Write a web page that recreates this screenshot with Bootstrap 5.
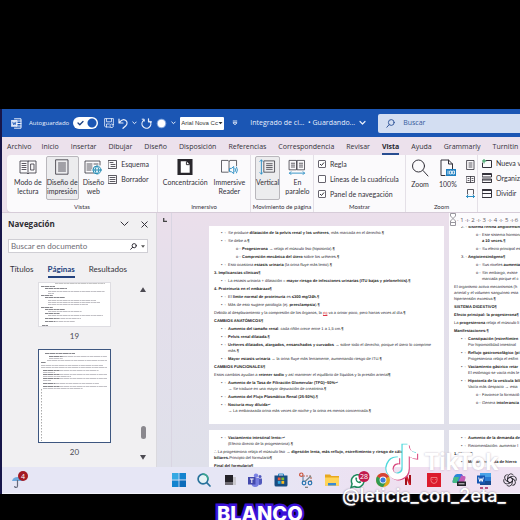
<!DOCTYPE html>
<html lang="es">
<head>
<meta charset="utf-8">
<meta name="viewport" content="width=device-width, initial-scale=1">
<title>Integrado de ciencias</title>
<link href="https://cdn.jsdelivr.net/npm/bootstrap@5.3.0/dist/css/bootstrap.min.css" rel="stylesheet">
<style>
body{background:#000;font-family:"Open Sans","Noto Sans",sans-serif;font-size:7px;line-height:10px;color:#33313a;padding:109px 0 26px;overflow:hidden}
button,input,select{font:inherit;color:inherit}
.plain{background:none;border:0;padding:0;color:inherit;flex:none;line-height:inherit}
a{color:inherit;text-decoration:none}
svg{display:block;flex:none}
.ln{fill:none;stroke:currentColor;stroke-width:1;stroke-linecap:round;stroke-linejoin:round}
.win{border-left:2px solid #17164a;background:#ece1ec;min-height:0}
.titlebar{background:#1b56b4;color:#e9effb;height:28px;padding-left:9px}
.autolabel{font-size:6px;margin:0 4px 0 7px}
.autosave{width:25px;height:12px;border-radius:6px;background:#fff;appearance:none;margin:0;flex:none;background:radial-gradient(circle at 19px 6px,#1b56b4 4px,#fff 5px)}
.switchbox{display:grid;margin-right:6px}
.switchbox>*{grid-area:1/1}
.switchbox svg{pointer-events:none;color:#1b3f80}
.fontpick{width:44px;height:13px;border:0;border-radius:1px;background:#fff;color:#333;font:6px "Liberation Sans",sans-serif;padding:0 0 0 1px;appearance:none}
.pickwrap{display:grid;align-items:center;justify-items:end}
.pickwrap>*{grid-area:1/1}
.pickwrap svg{color:#333;margin-right:1px;pointer-events:none}
.finder{background:#d3def2;border-radius:2px 0 0 2px;color:#365a9c;height:19px;padding-left:8px;min-width:0}
.finder input,.navfind input{background:none;border:0;outline:0;padding:0;min-width:0}
.finder input::placeholder{color:#365a9c;opacity:1}
.menutabs{height:18px;padding-left:5px;gap:12px;font-size:7px;white-space:nowrap;overflow:hidden}
.menutabs a{padding:5px 0 1px;line-height:10px;border-bottom:2px solid transparent;flex:none}
.menutabs a.on{font-weight:700;color:#27282f;border-color:#284d91}
.menutabs a:first-child{margin-right:-2px}
.ribbon{background:#fbfafc;border-radius:4px 0 0 4px;margin-left:5px;height:57px;font-family:Lato,"Open Sans",sans-serif;overflow:hidden;box-shadow:0 1px 1px #cfc6d2}
.rgroup{border-right:1px solid #e4e0e7;flex:none;padding-top:1px}
.rgroup h2{font-size:6px;line-height:9px;margin:0 0 1px;text-align:center;font-weight:400}
.tool{background:none;border:1px solid transparent;border-radius:2px;padding:2px 0 0;display:flex;flex-direction:column;align-items:center;line-height:9px;height:44px;color:inherit;flex:none;white-space:nowrap}
.tool svg{margin-bottom:3px}
.tool.on{background:#ececee;border-color:#b9b7bc}
.toolrow{gap:3px;padding-left:6px}
.minis{gap:5px;white-space:nowrap;padding-top:3px}
.zoomminis{gap:6px;padding-top:4px}
.tick{appearance:none;width:8px;height:8px;border:1px solid #67646e;border-radius:1px;margin:0;flex:none;background:#fff}
.tick:checked{background:#fff url("data:image/svg+xml,%3Csvg xmlns='http://www.w3.org/2000/svg' viewBox='0 0 6 6'%3E%3Cpath d='M1 3l1.500 1.500L5 1.500' fill='none' stroke='%2333313a'/%3E%3C/svg%3E") center/6px 6px no-repeat}
.work{min-height:0;flex:1 1 0;border-top:1px solid #d6ccd8}
.navpane{flex:0 0 155px;background:#f1f0f2;border-right:1px solid #dad9de;padding:6px 0 0 6px}
.navpane h1{font-size:8px;line-height:10px;font-weight:700;margin:0;color:#2c2b31}
.navfind{border:1px solid #cfced4;background:#fff;height:14px;margin:10px 8px 0 0;padding:0 2px 0 2px;font-family:Lato,sans-serif;font-size:8px}
.navfind input::placeholder{color:#6e6c75;opacity:1}
.navtabs{gap:14px;padding:11px 0 0 2px;font-family:Lato,sans-serif;font-size:8px}
.navtabs a{border-bottom:2px solid transparent;padding-bottom:2px}
.navtabs a.on{font-weight:700;color:#24427e;border-color:#24427e}
.thumbs{min-height:0;color:#4c4b54;font-size:8px;font-family:Lato,sans-serif;padding-left:30px}
.thumbpic{background:#fff;width:73px;border:1px solid #dedde2}
.thumbpic.on{border:1px solid #3d5680}
.bar{width:14px;padding:9px 0 7px;color:#55535b}
.knob{width:5px;height:13px;border-radius:3px;background:#8a888e}
.canvas{background:linear-gradient(#ebdfeb,#e4dfeb 30%,#dfe0ea);min-width:0;overflow:hidden}
.gutter{flex:0 0 52px}
.gutter i{width:15px;border-right:1px solid #d9d5e2;padding:5px 0 0 6px;color:#444}
.sheets{display:grid;grid-template-columns:235px 1fr;grid-template-rows:13px auto 1fr;column-gap:5px;min-width:0;flex:1}
.sheet{background:#fff;font:4px/6px "Liberation Sans",Arial,sans-serif;text-rendering:geometricPrecision;color:#2c2b32;white-space:nowrap;overflow:hidden;padding:4px 0 8px 5px;margin-bottom:6px;min-width:0}
.sheet.right{padding-top:0}
.sheet.right>p:first-child{margin-top:-2px}
.sheet.next{padding-top:5px;margin-bottom:0}
.sheet p{margin:0 0 2px}
.sheet b{color:#1b1a20}
.b1{padding-left:14px}
.b2{padding-left:28px}
.b1::before,.b2::before{content:"•  -";white-space:pre;display:inline-block;width:7px;margin-left:-7px}
.b2::before{content:"o -";width:6px;margin-left:-6px}
.n1{padding-left:7px}
.rulerbar{background:#fcfbfd;color:#5c5a63;font-size:6px;line-height:12px;white-space:nowrap;overflow:hidden;min-width:0}
.taskbar{background:linear-gradient(90deg,#e6e6f5 50%,#f0dff0 80%,#efe3f3);height:27px;padding:0 3px 0 9px;border-bottom:1px solid #f4f4fb}
.apps{margin-left:143px}
.apps .plain{width:14px}
.wm{position:absolute;color:#fff;pointer-events:none;white-space:nowrap;font-family:Inter,sans-serif}
.wm-logo{left:381px;top:441px}
.wm-name{left:424px;top:447px;font-size:23px;line-height:30px;font-weight:700;text-shadow:0 0 2px #b9aebf}
.wm-user{left:342px;top:484px;font-size:18px;line-height:24px;font-weight:500;text-shadow:0 0 2px #8f8a99}
.caption{left:217px;top:502px;font-size:20px;line-height:24px;font-weight:800;-webkit-text-stroke:5px #3a12d8;paint-order:stroke fill}
</style>
<script src="https://cdn.jsdelivr.net/npm/bootstrap@5.3.0/dist/js/bootstrap.bundle.min.js"></script>
</head>
<body class="vh-100 d-flex flex-column position-relative">

<div class="win flex-fill d-flex flex-column">
  <header class="titlebar d-flex align-items-center flex-shrink-0">
    <svg width="11" height="11" viewBox="0 0 11 11" class="ln"><path d="M3.500.8h6.500v9.400H3.500M5.500 3h4.500M5.500 5.500h4.500M5.500 8h4.500"/><rect x=".6" y="2.600" width="5.400" height="5.600" fill="#dfe8f8"/><path d="M1.800 4.200l.7 2.500.8-2 .8 2 .7-2.500" stroke="#1b56b4" stroke-width=".8"/></svg>
    <label for="auto" class="autolabel">Autoguardado</label>
    <span class="switchbox flex-shrink-0"><input type="checkbox" id="auto" class="autosave" checked><svg width="12" height="12" viewBox="0 0 12 12" class="ln"><path d="M5 6l1.800 1.800L10 4.500" stroke-width="1.300"/></svg></span>
    <button class="plain me-1" aria-label="Guardar"><svg width="10" height="10" viewBox="0 0 10 10" class="ln"><path d="M5 9H1.500L.6 8V.6h8.800V5M2.500.8v3h5v-3M2.500 9V6h3M6 7.500a1.800 1.800 0 0 1 3.400-.5M9.500 5.800V7H8.300M9.500 8a1.800 1.800 0 0 1-3.300.8M6 9.800V8.600" stroke-width=".8"/></svg></button>
    <button class="plain me-1" aria-label="Deshacer"><svg width="10" height="11" viewBox="0 0 10 11" class="ln"><path d="M1 1v4h4M1.200 4.800C3 2 5.500 1 7.500 2.200s2 4 .3 5.500L5 10.300" stroke-width="1.200"/></svg></button>
    <svg width="5" height="4" viewBox="0 0 5 4" class="ln me-1"><path d="M.8 1l1.700 1.700L4.200 1"/></svg>
    <button class="plain me-1" aria-label="Rehacer"><svg width="11" height="11" viewBox="0 0 11 11" class="ln"><path d="M7.500.8v3h3M2.800 2.300A4.400 4.400 0 1 0 9 3.300" stroke-width="1.200"/><path d="M1.200 1.200h2v2"/></svg></button>
    <button class="plain me-1" aria-label="Grabar"><svg width="11" height="11" viewBox="0 0 11 11"><circle cx="5.500" cy="5.500" r="4.800" fill="#7fa3dd"/><circle cx="5.500" cy="5.500" r="3.700" fill="#fff"/></svg></button>
    <svg width="5" height="4" viewBox="0 0 5 4" class="ln me-1"><path d="M.8 1l1.700 1.700L4.200 1"/></svg>
    <span class="pickwrap flex-shrink-0"><select class="fontpick" aria-label="Fuente"><option>Arial Nova Cc</option></select><svg width="5" height="4" viewBox="0 0 5 4"><path d="M.5 1h4L2.500 3.300z" fill="#333"/></svg></span>
    <svg width="6" height="6" viewBox="0 0 6 6" class="ln flex-shrink-0 mx-2"><path d="M1.200 1h3.600M1.200 3l1.800 1.700L4.800 3z" stroke-width=".9"/></svg>
    <span class="text-nowrap ms-1">Integrado de ci...&nbsp; • Guardando...</span>
    <svg width="7" height="6" viewBox="0 0 7 6" class="ln ms-1 me-2"><path d="M1 1.500l2.500 2.500L6 1.500" stroke-width="1.200"/></svg>
    <label class="finder d-flex flex-fill align-items-center gap-2 ms-1" for="find"><svg width="9" height="9" viewBox="0 0 9 9" class="ln"><circle cx="5.300" cy="3.500" r="2.900"/><path d="M3.200 5.600L.8 8.300"/></svg><input id="find" class="flex-fill" placeholder="Buscar"></label>
  </header>

  <nav class="menutabs d-flex flex-shrink-0">
    <a href="#">Archivo</a><a href="#">Inicio</a><a href="#">Insertar</a><a href="#">Dibujar</a><a href="#">Diseño</a><a href="#">Disposición</a><a href="#">Referencias</a><a href="#">Correspondencia</a><a href="#">Revisar</a><a href="#" class="on">Vista</a><a href="#">Ayuda</a><a href="#">Grammarly</a><a href="#">Turnitin</a>
  </nav>

  <section class="ribbon d-flex flex-shrink-0">
    <div class="rgroup d-flex flex-column justify-content-between" style="width:151px">
      <div class="d-flex toolrow">
        <button class="tool"><svg width="18" height="16" viewBox="0 0 18 16" class="ln"><path d="M9 2H1v12h7l1 1 1-1h7V2H9v12M3 4.500h4M3 6.500h4M3 8.500h4M3 10.500h4M12 5h3v6h-3z" stroke-width=".8"/></svg>Modo de<br>lectura</button>
        <button class="tool on"><svg width="14" height="16" viewBox="0 0 14 16" class="ln"><path d="M1 .8h12v14.400H1zM3.500 4h7M3.500 6h7M3.500 8h7M3.500 10h7M3.500 12h7" stroke-width=".8"/></svg>Diseño de<br>impresión</button>
        <button class="tool"><svg width="18" height="16" viewBox="0 0 18 16" class="ln"><path d="M10 14H1V2h15v4M3 5h5M3 7h5M3 9h5M3 11h4M10 5h4" stroke-width=".8"/><g stroke="#2d8fb5"><circle cx="13" cy="11" r="4" fill="#dff1f8"/><path d="M9 11h8M13 7c-2.500 2.500-2.500 5.500 0 8 2.500-2.500 2.500-5.500 0-8"/></g></svg>Diseño<br>web</button>
        <div class="d-flex flex-column minis">
          <button class="plain d-flex gap-1 align-items-center"><svg width="9" height="9" viewBox="0 0 9 9" class="ln"><path d="M.5.500h8v8h-8zM2 2.500h3M3 4.500h4M3 6.500h4" stroke-width=".8"/></svg>Esquema</button>
          <button class="plain d-flex gap-1 align-items-center"><svg width="9" height="9" viewBox="0 0 9 9" class="ln"><path d="M.5.500h8v8h-8zM2 2.500h5M2 4.500h5M2 6.500h5" stroke-width=".8"/></svg>Borrador</button>
        </div>
      </div>
      <h2>Vistas</h2>
    </div>
    <div class="rgroup d-flex flex-column justify-content-between" style="width:93px">
      <div class="d-flex justify-content-center gap-1">
        <button class="tool"><svg width="16" height="16" viewBox="0 0 16 17"><path d="M0 0h16v17H0z" fill="#29272c"/><path d="M3.500 2.500h6l3.500 3.500v8.500h-9.500z" fill="#fff"/><path d="M9.500 2.500v3.500h3.500" fill="none" stroke="#29272c"/></svg>Concentración</button>
        <button class="tool"><svg width="19" height="16" viewBox="0 0 19 17" class="ln"><path d="M8 14H1V1.500h7l1 1 1-1h7V7M9 2.500V13" stroke-width=".8"/><g stroke="#2d8fc4"><path d="M10 10h1.500L14 8v7.500L11.500 13.500H10zM15.500 10q1 1.700 0 3.400M17 8.500q2 3.200 0 6.300"/></g></svg>Immersive<br>Reader</button>
      </div>
      <h2>Inmersivo</h2>
    </div>
    <div class="rgroup d-flex flex-column justify-content-between" style="width:63px">
      <div class="d-flex gap-1 ps-1">
        <button class="tool on"><svg width="17" height="16" viewBox="0 0 17 17" class="ln"><path d="M5 2h11v12H5zM7.500 5h6M7.500 7h6M7.500 9h6M7.500 11h6" stroke-width=".8"/><path d="M2 1v15M.5 2.500L2 1l1.500 1.500M.5 14.500L2 16l1.500-1.500" stroke="#2d8fc4"/></svg>Vertical</button>
        <button class="tool"><svg width="18" height="16" viewBox="0 0 18 17" class="ln"><path d="M1 1.500h7.500v10H1zM9.500 1.500H17v10H9.500zM3 4.500h3.500M3 6.500h3.500M3 8.500h3.500M11.500 4.500H15M11.500 6.500H15M11.500 8.500H15" stroke-width=".8"/><path d="M1 15h16M2.500 13.500L1 15l1.500 1.500M15.500 13.500L17 15l-1.500 1.500" stroke="#2d8fc4"/></svg>En<br>paralelo</button>
      </div>
      <h2 class="text-nowrap">Movimiento de página</h2>
    </div>
    <div class="rgroup d-flex flex-column justify-content-between" style="width:92px">
      <div class="d-flex flex-column minis ps-1">
        <label class="d-flex gap-1 align-items-center"><input type="checkbox" class="tick" checked>Regla</label>
        <label class="d-flex gap-1 align-items-center"><input type="checkbox" class="tick">Líneas de la cuadrícula</label>
        <label class="d-flex gap-1 align-items-center"><input type="checkbox" class="tick" checked>Panel de navegación</label>
      </div>
      <h2>Mostrar</h2>
    </div>
    <div class="rgroup d-flex flex-column justify-content-between" style="width:72px">
      <div class="d-flex gap-2 ps-1">
        <button class="tool"><svg width="18" height="18" viewBox="0 0 18 18" class="ln"><circle cx="7.500" cy="7" r="6"/><path d="M12 11.500l5 5.500"/></svg>Zoom</button>
        <button class="tool"><svg width="16" height="18" viewBox="0 0 16 18" class="ln"><path d="M5 16.500H1V1h7.500L12.500 5v5M8.500 1v4h4"/><path d="M6 10h10v7H6z" fill="#1f7fc0" stroke="none"/><path d="M8 12v3M10 12h1.500v3H10zM13 12h1.500v3H13z" stroke="#fff" stroke-width=".8"/></svg>100%</button>
        <div class="d-flex flex-column zoomminis">
          <button class="plain" aria-label="Una página"><svg width="9" height="10" viewBox="0 0 9 10" class="ln"><path d="M1 .5h7v9H1zM3 3h3M3 5h3M3 7h3" stroke-width=".8"/></svg></button>
          <button class="plain" aria-label="Varias páginas"><svg width="9" height="7" viewBox="0 0 9 7" class="ln"><path d="M.5.500h8v6h-8zM4.500.5v6M2 2.500h1M2 4.500h1M6 2.500h1M6 4.500h1" stroke-width=".8"/></svg></button>
          <button class="plain" aria-label="Ancho de página"><svg width="9" height="9" viewBox="0 0 9 9" class="ln"><path d="M1.500 5V.5h6V5" stroke-width=".8"/><path d="M.5 7.500h8M2 6L.5 7.500 2 9M7 6l1.500 1.500L7 9" stroke="#2d8fc4"/></svg></button>
        </div>
      </div>
      <h2>Zoom</h2>
    </div>
    <div class="rgroup border-0 d-flex flex-column minis ps-1">
      <button class="plain d-flex gap-1 align-items-center"><svg width="10" height="9" viewBox="0 0 10 9" class="ln"><path d="M4 1.500h5.500v7h-9V4"/><path d="M2 0v4M0 2h4" stroke="#2a9a58"/></svg>Nueva ventana</button>
      <button class="plain d-flex gap-1 align-items-center"><svg width="10" height="10" viewBox="0 0 10 10" class="ln"><path d="M.5.500h9v3.500h-9zM.5 6h9v3.500h-9zM.5 1.500h9M.5 7h9"/></svg>Organizar todo</button>
      <button class="plain d-flex gap-1 align-items-center"><svg width="10" height="9" viewBox="0 0 10 9" class="ln"><path d="M.5.500h9v8h-9zM.5 4.500h9M.5 1.500h9"/></svg>Dividir</button>
    </div>
  </section>

  <main class="work d-flex">
    <aside class="navpane d-flex flex-column">
      <div class="d-flex align-items-center flex-shrink-0">
        <h1 class="me-auto">Navegación</h1>
        <button class="plain me-2" aria-label="Opciones"><svg width="9" height="6" viewBox="0 0 9 6" class="ln"><path d="M1 1l3.500 3.500L8 1"/></svg></button>
        <button class="plain ms-1 me-2" aria-label="Cerrar"><svg width="7" height="7" viewBox="0 0 7 7" class="ln"><path d="M.8.8l5.400 5.400M6.200.8L.8 6.200"/></svg></button>
      </div>
      <div class="navfind d-flex align-items-center flex-shrink-0"><input class="flex-fill" aria-label="Buscar en documento" placeholder="Buscar en documento"><svg width="7" height="7" viewBox="0 0 7 7" class="ln"><circle cx="4.200" cy="2.700" r="2.100"/><path d="M2.600 4.300L.7 6.300"/></svg><svg width="4" height="3" viewBox="0 0 4 3" class="ms-1"><path d="M0 .3h4L2 2.700z" fill="#555"/></svg></div>
      <nav class="navtabs d-flex flex-shrink-0"><a href="#">Títulos</a><a href="#" class="on">Páginas</a><a href="#">Resultados</a></nav>
      <div class="d-flex flex-fill" style="min-height:0">
        <div class="thumbs flex-fill d-flex flex-column overflow-hidden pt-1">
          <div style="width:73px" class="text-center">
            <div class="thumbpic"><svg width="71" height="43" viewBox="0 0 71 43" fill="none" stroke="#77767d" stroke-width=".7" stroke-dasharray="3 .4 5 .5 2 .4"><path d="M16 .5h50" stroke="#aaa"/><path d="M2 3.500h14M6 5.500h22M2 12.500h12M6 14.500h20M2 24.500h12M6 26.500h20M6 30.500h15M6 35.500h14M6 38.500h10M3 42.500h6" stroke="#55545b"/><path d="M9 8.500h57M9 10.500h6M9 17.500h48M9 19.500h52M9 21.500h40M9 28.500h34M9 32.500h55M18 35.500h24M16 38.500h20" stroke="#a5a4aa"/></svg></div>
            <div class="pt-1 mb-2">19</div>
            <div class="thumbpic on"><svg width="71" height="92" viewBox="0 0 71 92" fill="none" stroke="#a7a6ad" stroke-width=".7" stroke-dasharray="4 .4 6 .5 2 .4"><path d="M24 6.500h44M10 8.500h14M8 10.500h60M2 15.500h62M2 17.500h66M20 20.500h40M4 22.500h12M20 24.500h48M4 26.500h28M20 28.500h48M4 30.500h8M16 33.500h44M20 36.500h48M4 38.500h40"/><path d="M6 3.500h30M10 6.500h14M2 12.500h5M4 20.500h16M4 24.500h16M4 28.500h16M4 33.500h12M4 36.500h16" stroke="#55545b"/><path d="M2.500 39v52" stroke="#888" stroke-dasharray="1.500 1.500"/></svg></div>
            <div class="pt-1">20</div>
          </div>
        </div>
        <div class="bar d-flex flex-column align-items-center me-1 pe-1">
          <svg width="6" height="5" viewBox="0 0 6 5"><path d="M3 .3L6 5H0z" fill="#4c4a52"/></svg>
          <div class="knob mt-auto mb-3"></div>
          <svg width="6" height="5" viewBox="0 0 6 5"><path d="M3 4.700L6 0H0z" fill="#4c4a52"/></svg>
        </div>
      </div>
    </aside>

    <section class="canvas d-flex flex-fill">
      <div class="gutter d-flex"><i><svg width="4" height="4" viewBox="0 0 4 4"><path d="M.7 0v3.300H4" fill="none" stroke="#444" stroke-width="1.300"/></svg></i></div>
      <div class="sheets">
        <div></div>
        <div class="rulerbar d-flex align-items-center"><svg width="8" height="13" viewBox="0 0 8 13" fill="#fff" stroke="#99979f"><path d="M1.500.5h5V3L4 5.500 1.500 3zM4 5.500L6.500 8v4.500h-5V8zM1.500 9.500h5"/></svg>·&nbsp;1&nbsp;·ı·&nbsp;2&nbsp;·ı·&nbsp;3&nbsp;·ı·&nbsp;4&nbsp;·ı·&nbsp;5&nbsp;·ı·6</div>

        <article class="sheet">
          <p class="b1">Se produce <b>dilatación de la pelvis renal y los uréteres</b>, más marcada en el derecho.<b>¶</b></p>
          <p class="b1">Se debe a:<b>¶</b></p>
          <p class="b2"><b>Progesterona</b> → relaja el músculo liso (hipotonía).<b>¶</b></p>
          <p class="b2"><b>Compresión mecánica del útero</b> sobre los uréteres.<b>¶</b></p>
          <p class="b1">Esto ocasiona <b>estasis urinaria</b> (la orina fluye más lento).<b>¶</b></p>
          <p><b>3. Implicancias clínicas¶</b></p>
          <p class="b1">La estasis urinaria + dilatación = <b>mayor riesgo de infecciones urinarias (ITU bajas y pielonefritis).¶</b></p>
          <p><b>4. Proteinuria en el embarazo¶</b></p>
          <p class="b1">El <b>límite normal de proteinuria</b> es <b>≤300 mg/24h.¶</b></p>
          <p class="b1">Más de esto sugiere patología (ej. <b>preeclampsia</b>).<b>¶</b></p>
          <p>Debido al desplazamiento y la compresión de los órganos, la <u class="text-danger">pg</u> va a orinar poco, pero hartas veces al día.<b>¶</b></p>
          <p><b>CAMBIOS ANATÓMICOS¶</b></p>
          <p class="b1"><b>Aumento del tamaño renal</b>: cada riñón crece entre 1 a 1,5 cm.<b>¶</b></p>
          <p class="b1"><b>Pelvis renal dilatada.¶</b></p>
          <p class="b1"><b>Uréteres dilatados, alargados, ensanchados y curvados</b> → sobre todo el derecho, porque el útero lo comprime<br>más.<b>¶</b></p>
          <p class="b1"><b>Mayor estasis urinaria</b> → la orina fluye más lentamente, aumentando riesgo de ITU.<b>¶</b></p>
          <p><b>CAMBIOS FUNCIONALES¶</b></p>
          <p>Estos cambios ayudan a <b>retener sodio</b> y así mantener el equilibrio de líquidos y la presión arterial<b>¶</b></p>
          <p class="b1"><b>Aumento de la Tasa de Filtración Glomerular (TFG)~50%</b>↵<br>→ Se traduce en una mayor depuración de creatinina.<b>¶</b></p>
          <p class="b1"><b>Aumento del Flujo Plasmático Renal (25-50%).¶</b></p>
          <p class="b1"><b>Nocturia muy diluida</b>↵<br>→ La embarazada orina más veces de noche y la orina es menos concentrada.<b>¶</b></p>
        </article>

        <article class="sheet right">
          <p class="n1">2. - <b>Sistema renina angiotensina¶</b></p>
          <p class="b2">Este sistema hormonal<br><b>a 10 veces.¶</b></p>
          <p class="b2">Su efecto principal es</p>
          <p class="n1">3. - <b>Angiotensinógeno¶</b></p>
          <p class="b2">Sus niveles <b>aumentan</b></p>
          <p class="b2">Sin embargo, existe<br>marcada porque el c</p>
          <p>El organismo activa mecanismos (h<br>arterial y el volumen sanguíneo esta<br>hipertensión excesiva.<b>¶</b></p>
          <p><b>SISTEMA DIGESTIVO¶</b></p>
          <p><b>Efecto principal: la progesterona¶</b></p>
          <p>La <b>progesterona</b> relaja el músculo li</p>
          <p><b>Manifestaciones:¶</b></p>
          <p class="b1"><b>Constipación (estreñimien</b><br>Por hipomotilidad intestinal</p>
          <p class="b1"><b>Reflujo gastroesofágico (pi</b><br>Progesterona relaja el esfínt</p>
          <p class="b1"><b>Vaciamiento gástrico retar</b><br>El estómago se vacía más le</p>
          <p class="b1"><b>Hipotonía de la vesícula bili</b><br>Vacía más despacio → esta</p>
          <p class="b2">Favorece la formació</p>
          <p class="b2">Genera <b>intolerancia</b></p>
        </article>

        <article class="sheet next">
          <p class="b1"><b>Vaciamiento intestinal lento:</b>↵<br>(Efecto directo de la progesterona).<b>¶</b></p>
          <p>∴ La progesterona relaja el músculo liso → <b>digestión lenta, más reflujo, estreñimiento y riesgo de cálculos</b><br><b>biliares.</b>Principio del formulario<b>¶</b></p>
          <p><b>Final del formulario¶</b></p>
        </article>
        <article class="sheet next">
          <p class="b1"><b>Aumento de la demanda de</b></p>
          <p class="b1">Recomendación: aumentar l</p>
          <p><b>1. Hierro¶</b></p>
          <p class="b1"><b>Mayor demanda de hierro</b></p>
        </article>
      </div>
    </section>
  </main>

  <footer class="taskbar d-flex align-items-center flex-shrink-0">
    <button class="plain" aria-label="Tiempo"><svg width="18" height="18" viewBox="0 0 18 18"><path d="M1 10q1-4 5.500-4T12 10z" fill="#6fa9dd"/><path d="M6.500 9v6q0 1.500-1.500 1.500t-1.200-1.500" fill="none" stroke="#666a7c" stroke-width="1.200"/><circle cx="12" cy="5" r="5" fill="#a31924"/><text x="12" y="7.500" font-size="7" fill="#fff" text-anchor="middle">4</text></svg></button>
    <div class="apps d-flex flex-fill justify-content-between align-items-center">
      <button class="plain" aria-label="Inicio"><svg width="14" height="14" viewBox="0 0 14 14" fill="#1384cf"><path d="M0 0h6.600v6.600H0z" fill="#35a9e3"/><path d="M7.400 0H14v6.600H7.400zM0 7.400h6.600V14H0z"/><path d="M7.400 7.400H14V14H7.400z" fill="#0c6cba"/></svg></button>
      <button class="plain" aria-label="Buscar"><svg width="14" height="14" viewBox="0 0 14 14" fill="none" stroke="#28729c" stroke-width="1.700" stroke-linecap="round"><circle cx="6" cy="6" r="4.900" fill="#e6f4f5"/><path d="M6 1.100A4.900 4.900 0 0 1 10.900 6" stroke="#3aa88e"/><path d="M9.700 9.700l3.300 3.300"/></svg></button>
      <button class="plain" aria-label="Vista de tareas"><svg width="14" height="14" viewBox="0 0 14 14"><path d="M5 4h8v8H5z" fill="#c9c8ce"/><path d="M2 2h8v7H2z" fill="#242329"/><path d="M2 9h8v3H2z" fill="#6d6b72"/></svg></button>
      <button class="plain" aria-label="Teams"><svg width="14" height="14" viewBox="0 0 14 14"><circle cx="8" cy="2.600" r="2.200" fill="#7b83e4"/><circle cx="12" cy="3.500" r="1.500" fill="#5159bd"/><path d="M9 5.500h5v4q0 2.500-3 2.500z" fill="#5159bd"/><path d="M4 5h7v5q0 4-4 4-3 0-3.500-3z" fill="#747ce0"/><path d="M0 4h7.500v7.500H0z" fill="#4349ad"/><path d="M2 6h3.600M3.800 6v4" stroke="#fff" fill="none"/></svg></button>
      <button class="plain" aria-label="Tienda"><svg width="14" height="14" viewBox="0 0 14 14"><path d="M4.500 3V1h5v2" fill="none" stroke="#2b8cc9"/><path d="M.5 2.500h13V12q0 1.500-1.500 1.500H2Q.5 13.500.5 12z" fill="#174c82"/><path d="M3.800 4.500h2.800v2.800H3.800z" fill="#ee5635"/><path d="M7.400 4.500h2.800v2.800H7.400z" fill="#80bd32"/><path d="M3.800 8h2.800v2.800H3.800z" fill="#2ca7df"/><path d="M7.400 8h2.800v2.800H7.400z" fill="#f9bd22"/></svg></button>
      <button class="plain" aria-label="Recortes"><svg width="14" height="16" viewBox="0 0 14 16" fill="none" stroke-width="1.200"><path d="M4 4h8v6" stroke="#b76b58" stroke-dasharray="2 1"/><path d="M4 4v6" stroke="#6f89a5"/><circle cx="2.300" cy="2.700" r="1.700" stroke="#cc573f"/><circle cx="5" cy="11" r="1.800" stroke="#2674b0"/><circle cx="11" cy="11" r="1.800" stroke="#2674b0"/><path d="M6 9.500L12 4" stroke="#788"/><path d="M6 15.300h3" stroke="#777"/></svg></button>
      <button class="plain" aria-label="Explorador"><svg width="14" height="14" viewBox="0 0 14 14"><path d="M0 1.500h5l1.500 1.500H14v9.500H0z" fill="#e7a81f"/><path d="M0 4.500h14v8H0z" fill="#ffd458"/><path d="M3 10h8v2.500H3z" fill="#3b8ad0"/></svg></button>
      <button class="plain" aria-label="WhatsApp"><svg width="20" height="18" viewBox="0 0 20 18"><path d="M1 16.500l1.100-3.600A6.300 6.300 0 1 1 4.600 15.500z" fill="#fff" stroke="#1d8a5c" stroke-width="1.500"/><path d="M5.300 7q.8-1.200 1.500-.2l.5 1.200-.6.800q.8 1.500 2.300 2l.8-.8 1.400.8q.2 1.400-1.400 1.500Q5.500 12 5.300 7z" fill="#1d8a5c"/><circle cx="14" cy="5.500" r="5.500" fill="#c11a4c"/><text x="14" y="8" font-size="7" fill="#fff" text-anchor="middle">28</text></svg></button>
      <button class="plain" aria-label="Chrome"><svg width="14" height="14" viewBox="0 0 14 14"><circle cx="7" cy="7" r="7" fill="#e0a91f"/><path d="M7 7L1 3.500A7 7 0 0 1 13 3.500z" fill="#d64237"/><path d="M7 7L1 3.500A7 7 0 0 0 7 14l3-5z" fill="#2f9a52"/><circle cx="7" cy="7" r="3.400" fill="#fff"/><circle cx="7" cy="7" r="2.600" fill="#3b7ddd"/></svg></button>
      <button class="plain" aria-label="Netflix"><svg width="14" height="14" viewBox="0 0 14 14"><path d="M4 2h2v10H4zM8 2h2v10H8z" fill="#a3101b"/><path d="M4 2h2l4 10H8z" fill="#d51f2c"/></svg></button>
      <button class="plain" aria-label="Lector"><svg width="14" height="14" viewBox="0 0 14 14"><path d="M0 0h14v14H0z" fill="#dc1c2c"/><path d="M4 4.500h6v3Q10 10 7 10.500 4 10 4 7.500zM5.500 6.500h.6M8 6.500h.6" fill="none" stroke="#f68f91" stroke-width=".8"/></svg></button>
      <button class="plain" aria-label="Copilot"><svg width="14" height="14" viewBox="0 0 14 14"><path d="M5 1h4q1.500 0 1 1.700L8 10H2Q0 10 .6 8L2 3.500Q3 1 5 1z" fill="#2b86d9"/><path d="M.8 7.500Q0 10 2 10h3l2-6H2z" fill="#45b985"/><path d="M9 3h3q2 0 1.500 2L12 10q-.5 2-3 2H5z" fill="#c15bb4"/><path d="M9 1q1.500 0 2 2H8z" fill="#6a5ad5"/><path d="M5 8.500h9v4.500H5z" fill="#26242b"/><path d="M6.500 10.800h6" stroke="#ddd"/></svg></button>
      <button class="plain" aria-label="Word"><svg width="14" height="18" viewBox="0 0 14 18"><path d="M3 2h11v4H3z" fill="#4aa3e8"/><path d="M3 6h11v4H3z" fill="#2b7cd3"/><path d="M3 10h11v4H3z" fill="#174a91"/><path d="M0 4.500h8v8H0z" fill="#1858b4"/><path d="M1.700 6.500L2.800 10.500 4 7.500l1.200 3 1.100-4" fill="none" stroke="#fff"/><path d="M3 17h3M8 17h3" stroke="#a4265e" stroke-width="1.500"/></svg></button>
      <button class="plain" aria-label="ChatGPT"><svg width="14" height="14" viewBox="0 0 14 14" fill="none" stroke="#2b2a31" stroke-width=".9"><defs><path id="petal" d="M7 4.200L9.400 5.600V9.500Q9.200 12.800 6.300 13.200 4.300 13.200 3.500 11.700"/></defs><use href="#petal"/><use href="#petal" transform="rotate(60 7 7)"/><use href="#petal" transform="rotate(120 7 7)"/><use href="#petal" transform="rotate(180 7 7)"/><use href="#petal" transform="rotate(240 7 7)"/><use href="#petal" transform="rotate(300 7 7)"/></svg></button>
    </div>
  </footer>
</div>

<svg class="wm wm-logo" width="42" height="42" viewBox="0 0 24 24"><defs><path id="note" d="M19.590 6.690a4.830 4.830 0 0 1-3.770-4.250V2h-3.450v13.670a2.890 2.890 0 0 1-5.200 1.740 2.890 2.890 0 0 1 2.310-4.640 2.930 2.930 0 0 1 .88.130V9.400a6.840 6.840 0 0 0-1-.05A6.330 6.330 0 0 0 5 20.100a6.340 6.340 0 0 0 10.860-4.430v-7a8.160 8.160 0 0 0 4.770 1.520v-3.400a4.850 4.850 0 0 1-1-.1z"/></defs><use href="#note" x="-.7" y="-.5" fill="#4fd9dc"/><use href="#note" x=".6" y=".5" fill="#d8457c"/><use href="#note" fill="#fff"/></svg>
<div class="wm wm-name">TikTok</div>
<div class="wm wm-user">@leticia_con_2eta_</div>
<div class="wm caption">BLANCO</div>
</body>
</html>
